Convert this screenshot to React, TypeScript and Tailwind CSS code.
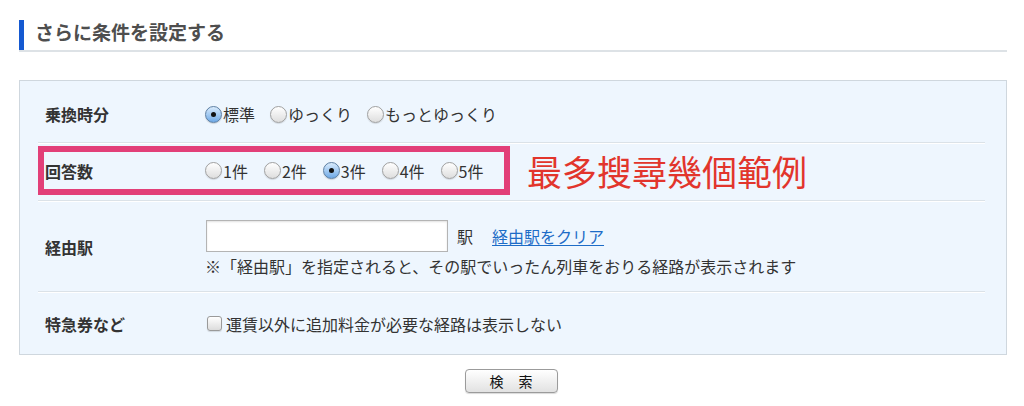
import React from "react";

const jp = { fontFamily: '"Noto Sans CJK JP", "Noto Sans", sans-serif' };

function Radio({ checked, label }: { checked?: boolean; label: string }) {
  return (
    <span className="flex items-center">
      {checked ? (
        <span className="flex h-[17px] w-[17px] shrink-0 items-center justify-center rounded-full border border-[#5d7fa3] bg-linear-to-b from-[#d9ebfc] to-[#6ea9e6] shadow-[0_1px_1px_rgba(0,0,0,0.15)]">
          <span className="h-[5px] w-[5px] rounded-full bg-[#111]" />
        </span>
      ) : (
        <span className="h-[17px] w-[17px] shrink-0 rounded-full border border-[#a0a0a0] bg-linear-to-b from-[#ffffff] to-[#dedede] shadow-[0_1px_1px_rgba(0,0,0,0.12)]" />
      )}
      <span className="ml-[1px] text-[16px] leading-[20px] text-[#333]">{label}</span>
    </span>
  );
}

function Sep() {
  return <div className="h-[2px] bg-[#dbe2e8] border-b border-white" />;
}

export default function App() {
  return (
    <div className="min-h-[406px] w-[1024px] bg-white" style={jp}>
      <div className="ml-[19px] w-[988px] pt-[20px]">
        <div className="flex items-start">
          <div className="h-[30px] w-[5px] shrink-0 bg-[#1559d1]" />
          <div className="ml-[11px] text-[19px] font-bold leading-[24px] text-[#4e4e4e]">
            さらに条件を設定する
          </div>
        </div>
        <div className="h-[2px] bg-[#dde2e6]" />

        <div className="mt-[28px] border border-[#cfd7de] bg-[#eef6fe] pl-[18px] pr-[21px]">
          {/* row 1 */}
          <div className="flex h-[61px] items-center pl-[7px] pt-[5px]">
            <div className="w-[160px] text-[16px] font-bold text-[#333]">乗換時分</div>
            <div className="flex items-center gap-[15px]">
              <Radio checked label="標準" />
              <Radio label="ゆっくり" />
              <Radio label="もっとゆっくり" />
            </div>
          </div>
          <Sep />
          {/* row 2 */}
          <div className="flex items-center pt-[2px] pb-[5px]">
            <div className="flex h-[49px] w-[472px] items-center border-[6px] border-[#e23f78] pl-[1px]">
              <div className="w-[160px] text-[16px] font-bold text-[#333]">回答数</div>
              <div className="flex items-center gap-[16px]">
                <Radio label="1件" />
                <Radio label="2件" />
                <Radio checked label="3件" />
                <Radio label="4件" />
                <Radio label="5件" />
              </div>
            </div>
            <div
              className="ml-[17px] text-[35px] leading-[40px] text-[#e2352c]"
              style={{ fontFamily: '"Noto Sans CJK TC", "Noto Sans", sans-serif' }}
            >
              最多搜尋幾個範例
            </div>
          </div>
          <Sep />
          {/* row 3 */}
          <div className="flex h-[89px] items-center pl-[7px]">
            <div className="w-[160px] pt-[1px] text-[16px] font-bold text-[#333]">経由駅</div>
            <div className="flex flex-col pt-[2px]">
              <div className="flex items-center">
                <input
                  type="text"
                  className="ml-[1px] h-[32px] w-[242px] border border-[#b4b4b4] bg-white shadow-[inset_0_1px_2px_rgba(0,0,0,0.12)] outline-none"
                />
                <span className="ml-[9px] text-[16px] text-[#333]">駅</span>
                <a href="#" className="ml-[19px] text-[16px] text-[#1d6cc7] underline underline-offset-2">
                  経由駅をクリア
                </a>
              </div>
              <div className="mt-[4px] text-[16px] leading-[20px] text-[#333]">
                ※「経由駅」を指定されると、その駅でいったん列車をおりる経路が表示されます
              </div>
            </div>
          </div>
          <Sep />
          {/* row 4 */}
          <div className="flex h-[61px] items-center pl-[7px]">
            <div className="w-[160px] text-[16px] font-bold text-[#333]">特急券など</div>
            <label className="flex items-center">
              <span className="ml-[2px] h-[15px] w-[15px] shrink-0 rounded-[3px] border border-[#9a9a9a] bg-linear-to-b from-[#ffffff] to-[#dcdcdc] shadow-[0_1px_1px_rgba(0,0,0,0.12)]" />
              <span className="ml-[4px] text-[16px] text-[#333]">運賃以外に追加料金が必要な経路は表示しない</span>
            </label>
          </div>
        </div>

        <div className="mt-[14px] flex justify-center">
          <button className="mr-[4px] h-[24px] w-[93px] rounded-[4px] border border-[#9b9b9b] bg-linear-to-b from-[#ffffff] to-[#e2e2e2] pl-[6px] text-[14px] leading-[20px] tracking-[6px] text-[#111] shadow-[0_1px_1px_rgba(0,0,0,0.15)]">
            検 索
          </button>
        </div>
      </div>
    </div>
  );
}
